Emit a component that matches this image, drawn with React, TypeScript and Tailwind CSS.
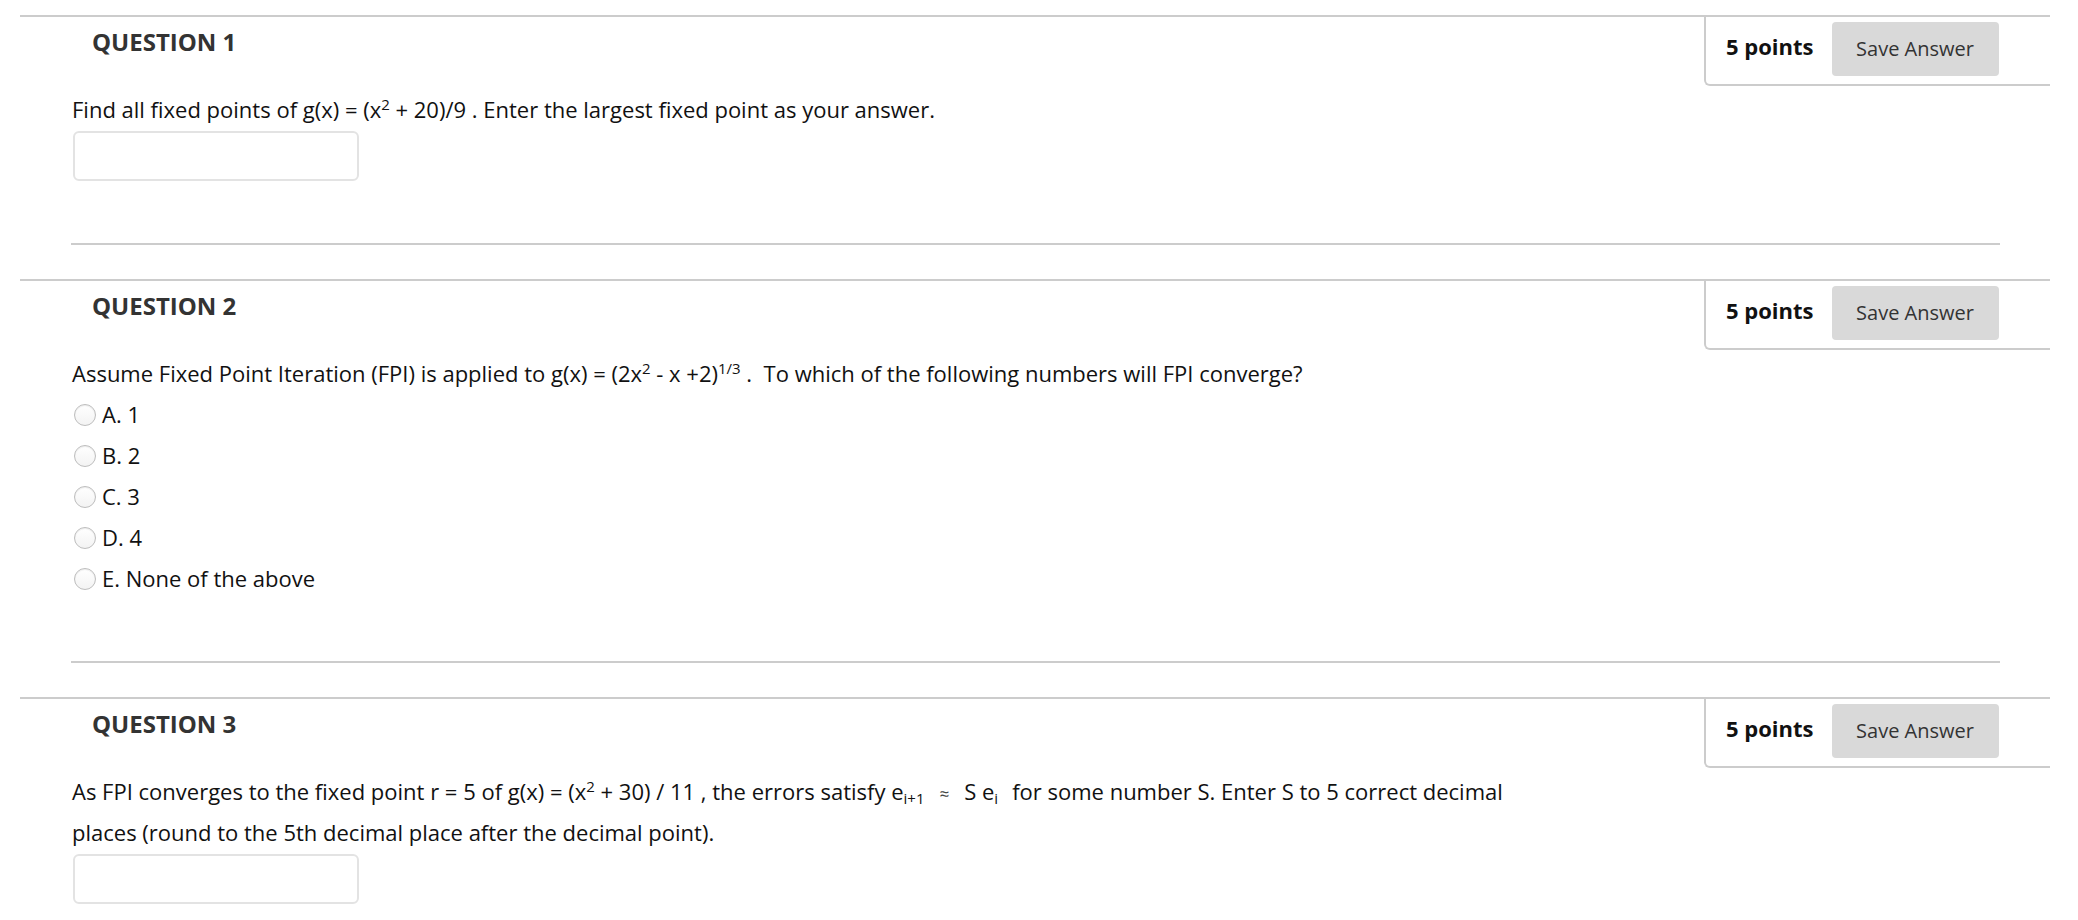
import React from "react";

type QuestionPropType = {
  number: number;
  children: React.ReactNode;
};

function PointsBox() {
  return (
    <div className="flex items-start h-[69px] w-[346px] pl-[20px] pt-[5px] border-l-2 border-b-2 border-[#cccccc] rounded-bl-[6px]">
      <span className="mt-[13px] text-[22px] leading-[22px] font-bold text-[#111]">5 points</span>
      <button className="ml-[18px] w-[167px] h-[54px] bg-[#d9d9d9] rounded-[4px] text-[20px] text-[#333] flex items-center justify-center">
        Save Answer
      </button>
    </div>
  );
}

function Question({ number, children }: QuestionPropType) {
  return (
    <div className="w-[2030px] border-t-2 border-[#cccccc]">
      <div className="flex justify-between items-start">
        <h2 className="ml-[72px] pt-[13px] text-[24px] leading-[24px] font-bold text-[#333]">
          QUESTION {number}
        </h2>
        <PointsBox />
      </div>
      <div className="pl-[52px] pt-[3px] text-[22px] leading-[41px] text-[#111]">{children}</div>
      <div className="ml-[51px] mt-[62px] w-[1929px] h-[2px] bg-[#cccccc]" />
    </div>
  );
}

function AnswerInput() {
  return <div className="ml-[1px] mt-[1px] w-[286px] h-[50px] rounded-[6px] border-2 border-[#e3e3e3] bg-white" />;
}

function Radio({ label }: { label: string }) {
  return (
    <div className="flex items-center h-[41px]">
      <span className="ml-[2px] w-[22px] h-[22px] rounded-full border border-[#bdbdbd] bg-linear-to-b from-white to-[#f3f3f3] shadow-[inset_0_1px_1px_rgba(0,0,0,0.08)]" />
      <span className="ml-[6px]">{label}</span>
    </div>
  );
}

// preflight already makes sup/sub relative; only the offset and size are set here
const sup = "text-[15px] leading-none -top-[8px]";
const sub = "text-[15px] leading-none -bottom-[4px]";

export default function App() {
  return (
    <div className="h-[920px] overflow-hidden bg-white font-['Open_Sans',sans-serif] pl-[20px] pt-[15px]">
      <Question number={1}>
        <p>
          Find all fixed points of g(x) = (x<sup className={sup}>2</sup> + 20)/9 . Enter the largest fixed point as your
          answer.
        </p>
        <AnswerInput />
      </Question>

      <div className="mt-[34px]">
        <Question number={2}>
          <p>
            Assume Fixed Point Iteration (FPI) is applied to g(x) = (2x<sup className={sup}>2</sup> - x +2)
            <sup className={sup}>1/3</sup> .&nbsp; To which of the following numbers will FPI converge?
          </p>
          {["A. 1", "B. 2", "C. 3", "D. 4", "E. None of the above"].map((o) => (
            <Radio key={o} label={o} />
          ))}
        </Question>
      </div>

      <div className="mt-[34px]">
        <Question number={3}>
          <p className="max-w-[1480px]">
            As FPI converges to the fixed point r = 5 of g(x) = (x<sup className={sup}>2</sup> + 30) / 11 , the errors
            satisfy e<sub className={sub}>i+1</sub>
            <span className="mx-[15px] text-[17px] leading-none text-[#444]">≈</span>S e<sub className={sub}>i</sub>
            <span className="ml-[14px]">for some number S. Enter S to 5 correct decimal places (round to the 5th decimal place after the decimal point).</span>
          </p>
          <AnswerInput />
        </Question>
      </div>
    </div>
  );
}
